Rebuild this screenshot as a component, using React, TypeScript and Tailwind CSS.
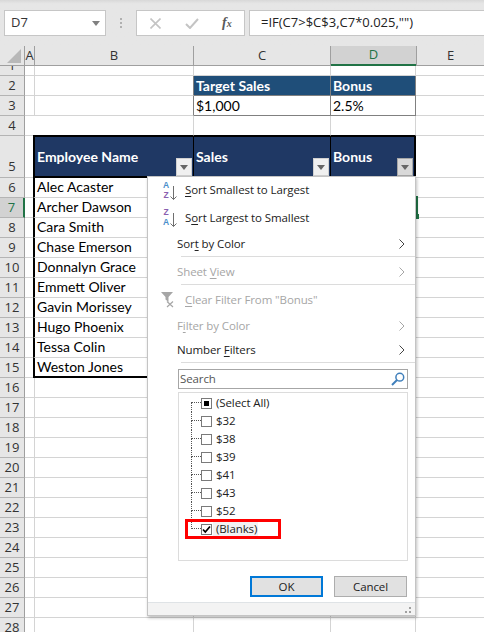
import React from 'react';

const uiFont = "font-['Open_Sans','Noto_Sans',sans-serif]";
const cellFont = "font-['Lato','Liberation_Sans',sans-serif]";

const names = ['Alec Acaster', 'Archer Dawson', 'Cara Smith', 'Chase Emerson', 'Donnalyn Grace', 'Emmett Oliver', 'Gavin Morissey', 'Hugo Phoenix', 'Tessa Colin', 'Weston Jones'];
const values = ['$32', '$38', '$39', '$41', '$43', '$52'];
const lowerRows = [16, 17, 18, 19, 20, 21, 22, 23, 24, 25, 26, 27, 28];

const RowHead = ({ n, selected, className = '' }: { n: number; selected?: boolean; className?: string }) => (
    <div
        className={`w-[25px] shrink-0 flex items-end justify-center overflow-hidden border-b border-b-[#b4b4b4] text-[13px] leading-[19px] ${uiFont} ${selected ? 'bg-[#d2d2d2] text-[#217346] border-r-2 border-r-[#217346]' : 'bg-[#e6e6e6] text-[#333] border-r border-r-[#9f9f9f]'} ${className}`}
    >
        {n}
    </div>
);

const Cell = ({ className = '', children }: { className?: string; children?: React.ReactNode }) => (
    <div className={`shrink-0 flex items-center border-r border-b border-[#d4d4d4] overflow-hidden whitespace-nowrap ${className}`}>{children}</div>
);

const PlainRow = ({ n, h = 'h-[20px]' }: { n: number; h?: string }) => (
    <div className={`flex ${h} shrink-0`}>
        <RowHead n={n} />
        <Cell className="w-[10px]" />
        <Cell className="w-[159px]" />
        <Cell className="w-[137px]" />
        <Cell className="w-[85px]" />
        <Cell className="flex-1 border-r-0" />
    </div>
);

const FilterButton = ({ active }: { active?: boolean }) => (
    <div className={`absolute right-[1px] bottom-0 w-[16px] h-[18px] flex items-center justify-center border ${active ? 'bg-[#d9d9d9] border-[#a6a6a6]' : 'bg-[#f0f0f0] border-[#d0d0d0]'}`}>
        <svg width="8" height="5" viewBox="0 0 8 5">
            <path d="M0 0h8L4 5z" fill="#666" />
        </svg>
    </div>
);

const U = ({ children }: { children: React.ReactNode }) => <span className="underline underline-offset-2">{children}</span>;

const Chevron = ({ color }: { color: string }) => (
    <svg width="6" height="10" viewBox="0 0 6 10" className="absolute right-[10px] top-1/2 -translate-y-1/2">
        <path d="M0.5 0.5L5 5L0.5 9.5" fill="none" stroke={color} strokeWidth="1" />
    </svg>
);

const MenuItem = ({ h, indent, disabled, arrow, icon, children }: { h: string; indent: string; disabled?: boolean; arrow?: boolean; icon?: React.ReactNode; children: React.ReactNode }) => (
    <div className={`relative flex items-center shrink-0 ${h} ${indent} ${disabled ? 'text-[#a6a6a6]' : 'text-[#222]'}`}>
        {icon}
        <span>{children}</span>
        {arrow && <Chevron color={disabled ? '#a6a6a6' : '#444'} />}
    </div>
);

const SortIcon = ({ top, bottom, topColor, bottomColor, className }: { top: string; bottom: string; topColor: string; bottomColor: string; className: string }) => (
    <div className={`absolute left-[14px] flex items-end ${className}`}>
        <div className="flex flex-col w-[8px] items-center text-[8.5px] leading-[10px] font-bold font-['Liberation_Sans',sans-serif]">
            <span className={topColor}>{top}</span>
            <span className={bottomColor}>{bottom}</span>
        </div>
        <svg width="7" height="14" viewBox="0 0 7 14">
            <path d="M3.5 0v13.5M0.5 10.5l3 3 3-3" fill="none" stroke="#6f6f6f" strokeWidth="1" />
        </svg>
    </div>
);

const Separator = () => <div className="h-[1px] ml-[33px] bg-[#dcdcdc] shrink-0" />;

const TreeRow = ({ first, last, children }: { first?: boolean; last?: boolean; children: React.ReactNode }) => (
    <div className="flex items-center h-[18px] pl-[12px] text-[11.5px] text-[#222]">
        <div className="w-[10px] h-full flex flex-col shrink-0">
            <div className={`h-[9px] border-b border-dotted border-[#555] ${first ? '' : 'border-l'}`} />
            <div className={`flex-1 border-dotted border-[#555] ${last ? '' : 'border-l'}`} />
        </div>
        {children}
    </div>
);

const Box = ({ children }: { children?: React.ReactNode }) => (
    <div className="w-[11px] h-[11px] shrink-0 border border-[#7a7a7a] bg-white flex items-center justify-center">{children}</div>
);

const FilterMenu = () => (
    <div className={`absolute left-[147px] top-[176px] w-[269px] h-[440px] flex flex-col bg-white border border-[#c4c4c4] shadow-[1px_2px_3px_rgba(0,0,0,0.25)] text-[11.5px] tracking-[-0.1px] ${uiFont}`}>
        <MenuItem h="h-[26px]" indent="pl-[37px]" icon={<SortIcon className="top-[3px]" top="A" bottom="Z" topColor="text-[#4a8fcb]" bottomColor="text-[#8a5fb0]" />}>
            <U>S</U>ort Smallest to Largest
        </MenuItem>
        <MenuItem h="h-[29px]" indent="pl-[37px]" icon={<SortIcon className="top-[4px]" top="Z" bottom="A" topColor="text-[#8a5fb0]" bottomColor="text-[#4a8fcb]" />}>
            S<U>o</U>rt Largest to Smallest
        </MenuItem>
        <MenuItem h="h-[24px]" indent="pl-[29px]" arrow>
            Sor<U>t</U> by Color
        </MenuItem>
        <Separator />
        <div className="h-[2px] shrink-0" />
        <MenuItem h="h-[25px]" indent="pl-[29px]" disabled arrow>
            Sheet <U>V</U>iew
        </MenuItem>
        <Separator />
        <MenuItem
            h="h-[29px]"
            indent="pl-[37px]"
            disabled
            icon={
                <svg width="16" height="16" viewBox="0 0 16 16" className="absolute left-[13px] top-[7px]">
                    <path d="M0 0h12L7.5 5v5L4.5 7.5V5z" fill="#a6a6a6" />
                    <path d="M6 9.5l6 5.5M12 9.5l-6 5.5" stroke="#a6a6a6" strokeWidth="1.2" fill="none" />
                </svg>
            }
        >
            <U>C</U>lear Filter From "Bonus"
        </MenuItem>
        <MenuItem h="h-[24px]" indent="pl-[29px]" disabled arrow>
            F<U>i</U>lter by Color
        </MenuItem>
        <MenuItem h="h-[24px]" indent="pl-[29px]" arrow>
            Number <U>F</U>ilters
        </MenuItem>
        <Separator />
        <div className="mt-[6px] ml-[30px] w-[230px] h-[20px] shrink-0 border border-[#a6a6a6] flex items-center justify-between pl-[1px] pr-[2px] text-[#555]">
            <span>Search</span>
            <svg width="14" height="14" viewBox="0 0 14 14">
                <circle cx="8.8" cy="5.2" r="3.9" fill="none" stroke="#3f7fbb" strokeWidth="1.5" />
                <path d="M6 8L1 13" stroke="#3f7fbb" strokeWidth="2" />
            </svg>
        </div>
        <div className="mt-[3px] ml-[30px] w-[230px] h-[169px] shrink-0 border border-[#dcdcdc] pt-[1px]">
            <TreeRow first>
                <Box>
                    <div className="w-[5px] h-[5px] bg-black" />
                </Box>
                <span className="ml-[4px]">(Select All)</span>
            </TreeRow>
            {values.map((v) => (
                <TreeRow key={v}>
                    <Box />
                    <span className="ml-[4px]">{v}</span>
                </TreeRow>
            ))}
            <TreeRow last>
                <Box>
                    <svg width="9" height="9" viewBox="0 0 9 9">
                        <path d="M1 4.5L3.3 7L8 1.5" fill="none" stroke="#000" strokeWidth="1.7" />
                    </svg>
                </Box>
                <span className="ml-[1px] pl-[3px] pr-[1px] bg-[#f2f2f2]">(Blanks)</span>
            </TreeRow>
        </div>
        <div className="flex justify-end gap-[11px] mt-[15px] pr-[8px] shrink-0">
            <button className="w-[73px] h-[21px] bg-[#e1e1e1] border-2 border-[#0078d7] text-[#222] leading-none">OK</button>
            <button className="w-[73px] h-[21px] bg-[#e1e1e1] border border-[#adadad] text-[#222] leading-none">Cancel</button>
        </div>
        <div className="mt-[5px] flex-1 border-t border-[#dfe3e6] bg-[#f3f3f3] flex items-end justify-end pr-[4px] pb-[2px]">
            <svg width="6" height="6" viewBox="0 0 6 6">
                <path d="M4 0h2v2H4zM0 4h2v2H0zM4 4h2v2H4z" fill="#a0a0a0" />
            </svg>
        </div>
    </div>
);

export default function App() {
    return (
        <div className={`relative w-[484px] h-[632px] overflow-hidden bg-white flex flex-col ${cellFont}`}>
            {/* formula bar */}
            <div className={`h-[46px] shrink-0 bg-[#e6e6e6] bg-gradient-to-b from-[#d8d8d8] to-[#e6e6e6] to-[8%] pt-[10px] pl-[4px] flex items-start ${uiFont}`}>
                <div className="w-[102px] h-[26px] bg-white border border-[#c6c6c6] flex items-center justify-between pl-[6px] pr-[5px] text-[13px] text-[#333]">
                    D7
                    <svg width="8" height="5" viewBox="0 0 8 5">
                        <path d="M0 0h8L4 5z" fill="#808080" />
                    </svg>
                </div>
                <div className="w-[30px] h-[26px] flex flex-col items-center justify-center gap-[2px]">
                    <div className="w-[2px] h-[2px] bg-[#b0b0b0]" />
                    <div className="w-[2px] h-[2px] bg-[#b0b0b0]" />
                    <div className="w-[2px] h-[2px] bg-[#b0b0b0]" />
                </div>
                <div className="w-[109px] h-[26px] bg-white border border-[#c6c6c6] flex items-center pl-[13px]">
                    <svg width="11" height="11" viewBox="0 0 11 11">
                        <path d="M0.5 0.5L10.5 10.5M10.5 0.5L0.5 10.5" stroke="#c4c4c4" strokeWidth="1.6" fill="none" />
                    </svg>
                    <svg width="14" height="11" viewBox="0 0 14 11" className="ml-[24px]">
                        <path d="M1 6L5 10L13 1" stroke="#c4c4c4" strokeWidth="2" fill="none" />
                    </svg>
                    <span className="ml-[23px] text-[14px] leading-none font-bold italic text-[#595959] font-['Liberation_Serif',serif]">
                        f<span className="text-[10px]">x</span>
                    </span>
                </div>
                <div className="w-[4px]" />
                <div className="flex-1 h-[26px] bg-white border border-[#c6c6c6] border-r-0 flex items-center pl-[11px] text-[13px] text-[#222] whitespace-nowrap">
                    =IF(C7&gt;$C$3,C7*0.025,"")
                </div>
            </div>

            {/* column headers */}
            <div className={`flex h-[20px] shrink-0 bg-[#e6e6e6] text-[13px] text-[#333] ${uiFont}`}>
                <div className="w-[25px] shrink-0 border-r border-b border-[#9f9f9f] flex items-end justify-end pr-[3px] pb-[2px]">
                    <svg width="14" height="14" viewBox="0 0 14 14">
                        <path d="M14 0V14H0z" fill="#b8b8b8" />
                    </svg>
                </div>
                <div className="w-[10px] shrink-0 border-r border-b border-[#9f9f9f] flex items-center justify-center">A</div>
                <div className="w-[159px] shrink-0 border-r border-b border-[#9f9f9f] flex items-center justify-center">B</div>
                <div className="w-[137px] shrink-0 border-r border-b border-[#9f9f9f] flex items-center justify-center">C</div>
                <div className="w-[85px] shrink-0 bg-[#d2d2d2] border-b-2 border-[#217346] text-[#217346] flex items-center justify-center">D</div>
                <div className="flex-1 border-l border-l-[#9f9f9f] border-b border-b-[#9f9f9f] flex items-center justify-center">E</div>
            </div>

            {/* sheet */}
            <PlainRow n={1} h="h-[10px]" />
            <div className="flex h-[20px] shrink-0 text-[14px]">
                <RowHead n={2} />
                <Cell className="w-[10px]" />
                <Cell className="w-[159px] border-r-[#808080]" />
                <Cell className="w-[137px] bg-[#1f4e79] text-white font-bold pl-[2px] border-r-[#808080] border-b-[#808080]">Target Sales</Cell>
                <Cell className="w-[85px] bg-[#1f4e79] text-white font-bold pl-[2px] border-r-[#808080] border-b-[#808080]">Bonus</Cell>
                <Cell className="flex-1 border-r-0" />
            </div>
            <div className="flex h-[20px] shrink-0 text-[14px] text-black">
                <RowHead n={3} />
                <Cell className="w-[10px]" />
                <Cell className="w-[159px] border-r-[#808080]" />
                <Cell className="w-[137px] pl-[2px] border-r-[#808080] border-b-[#808080]">$1,000</Cell>
                <Cell className="w-[85px] pl-[2px] border-r-[#808080] border-b-[#808080]">2.5%</Cell>
                <Cell className="flex-1 border-r-0" />
            </div>
            <div className="flex h-[20px] shrink-0">
                <RowHead n={4} />
                <Cell className="w-[8px] border-r-0" />
                <Cell className="w-[161px] border-b-black" />
                <Cell className="w-[137px] border-b-black" />
                <Cell className="w-[85px] border-b-black" />
                <Cell className="flex-1 border-r-0" />
            </div>
            <div className="flex h-[42px] shrink-0 text-[14px] text-white font-bold">
                <RowHead n={5} className="font-normal leading-[22px]" />
                <Cell className="w-[8px] border-r-0" />
                <Cell className="relative w-[161px] bg-[#1f3864] border-l-2 border-t border-b-2 border-l-black border-t-black border-b-black border-r-black pl-[2px]">
                    Employee Name
                    <FilterButton />
                </Cell>
                <Cell className="relative w-[137px] bg-[#1f3864] border-t border-b-2 border-t-black border-b-black border-r-black pl-[2px]">
                    Sales
                    <FilterButton />
                </Cell>
                <Cell className="relative w-[85px] bg-[#1f3864] border-t border-b-2 border-r-2 border-black pl-[2px]">
                    Bonus
                    <FilterButton active />
                </Cell>
                <Cell className="flex-1 border-r-0" />
            </div>
            {names.map((name, i) => (
                <div key={name} className="flex h-[20px] shrink-0 text-[14px] text-black">
                    <RowHead n={i + 6} selected={i === 1} />
                    <Cell className="w-[8px] border-r-0" />
                    <Cell className={`w-[161px] border-l-2 border-l-black pl-[2px] ${i === 9 ? 'border-b-2 border-b-black pb-[1px]' : 'pb-[2px]'}`}>{name}</Cell>
                    <Cell className="w-[137px]" />
                    <Cell className="w-[85px] border-r-2 border-r-black" />
                    <Cell className="flex-1 border-r-0" />
                </div>
            ))}
            {lowerRows.map((n) => (
                <PlainRow key={n} n={n} />
            ))}

            {/* selected cell edge + fill handle sticking out from behind the menu */}
            <div className="absolute left-[416px] top-[196px] w-[2px] h-[22px] bg-[#217346]" />
            <div className="absolute left-[415px] top-[214px] w-[4px] h-[5px] bg-[#217346]" />

            <FilterMenu />

            {/* callout */}
            <div className="absolute left-[185px] top-[519px] w-[96px] h-[20px] border-[3px] border-[#ff0000]" />
        </div>
    );
}
